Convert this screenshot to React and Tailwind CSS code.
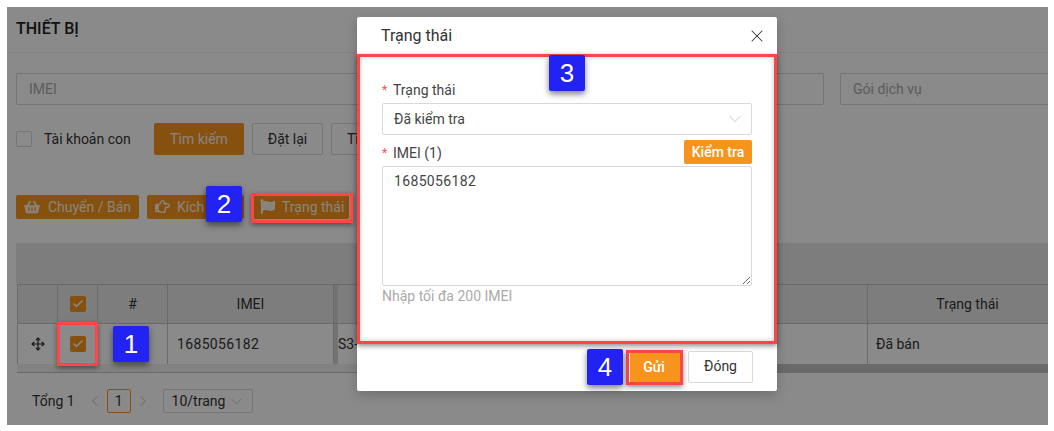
import React from 'react';
import { ChevronDown, ChevronLeft, ChevronRight, Move, X, Check } from 'lucide-react';
import { FaShoppingBasket, FaRegHandPointRight, FaFlag } from 'react-icons/fa';

const ActionButton = ({ icon: Icon, iconSize = 15, children, className = '' }) => (
  <button className={`h-6 flex items-center px-2 pb-[1px] bg-[#f7941d] text-white/90 rounded-[2px] text-sm whitespace-nowrap ${className}`}>
    <Icon size={iconSize} className="shrink-0" />
    {children}
  </button>
);

const CheckBox = () => (
  <span className="w-4 h-4 bg-[#f7941d] rounded-[2px] flex items-center justify-center text-white">
    <Check size={12} strokeWidth={3} />
  </span>
);

const Callout = ({ n, className }) => (
  <div className={`absolute w-9 h-9 bg-[#2222f2] text-white text-[26px] rounded-[2px] flex items-center justify-center shadow-[0_3px_6px_rgba(0,0,0,0.5)] font-['Liberation_Sans',sans-serif] ${className}`}>
    {n}
  </div>
);

const Highlight = ({ className }) => (
  <div className={`absolute border-[3px] border-[#ff4545] shadow-[0_2px_5px_rgba(0,0,0,0.45)] ${className}`} />
);

const Th = ({ className = '', children }) => (
  <div className={`shrink-0 border-r border-[#c4c4c4] flex items-center justify-center pb-[1px] ${className}`}>{children}</div>
);

const Page = () => (
  <div className="w-[1041px] h-[418px] bg-white text-[#333] overflow-hidden">
    <div className="h-[46px] pl-[9px] pb-[2px] flex items-center border-b border-[#f0f0f0] text-base font-medium text-[#222]">THIẾT BỊ</div>

    <div className="mt-5 ml-[9px] flex gap-4 w-[1100px]">
      <div className="w-[400px] h-8 border border-[#d9d9d9] rounded-[2px] px-3 flex items-center text-sm text-[#aaa]">IMEI</div>
      <div className="w-[392px] h-8 border border-[#d9d9d9] rounded-[2px]" />
      <div className="w-[260px] h-8 border border-[#d9d9d9] rounded-[2px] px-3 flex items-center text-sm text-[#aaa]">Gói dịch vụ</div>
    </div>

    <div className="mt-[18px] ml-[9px] flex items-center h-8">
      <span className="w-4 h-4 border border-[#d9d9d9] rounded-[2px]" />
      <span className="ml-3 w-[86px] text-sm whitespace-nowrap">Tài khoản con</span>
      <button className="ml-6 w-[90px] h-8 bg-[#f7941d] rounded-[2px] text-white/90 text-sm">Tìm kiếm</button>
      <button className="ml-2 w-[71px] h-8 border border-[#d9d9d9] rounded-[2px] text-sm">Đặt lại</button>
      <button className="ml-2 w-[71px] h-8 border border-[#d9d9d9] rounded-[2px] text-sm text-left pl-[15px]">Tìm</button>
    </div>

    <div className="mt-10 ml-[9px] flex gap-2 items-center">
      <ActionButton icon={FaShoppingBasket} iconSize={16} className="w-[123px] gap-2">Chuyển / Bán</ActionButton>
      <ActionButton icon={FaRegHandPointRight} className="w-[97px] gap-[7px]">Kích hoạt</ActionButton>
      <ActionButton icon={FaFlag} className="w-[97px] gap-[7px]">Trạng thái</ActionButton>
    </div>

    <div className="mt-6 ml-[9px] h-[41px] bg-[#e8e8e8]" />
    <div className="ml-[10px] text-sm">
      <div className="h-10 flex bg-[#e8e8e8] border-y border-[#c4c4c4] border-l">
        <Th className="w-10" />
        <Th className="w-10"><CheckBox /></Th>
        <Th className="w-[70px]">#</Th>
        <Th className="w-[166px]">IMEI</Th>
        <Th className="w-[534px] border-l-4 border-l-[#d4d4d4]" />
        <Th className="w-[200px]">Trạng thái</Th>
      </div>
      <div className="h-10 flex border-l border-[#c4c4c4]">
        <Th className="w-10"><Move size={14} className="text-[#222]" /></Th>
        <Th className="w-10"><CheckBox /></Th>
        <Th className="w-[70px]" />
        <Th className="w-[166px] !justify-start pl-[9px] tracking-[0.35px]">1685056182</Th>
        <Th className="w-[534px] !justify-start border-l-4 border-l-[#d4d4d4]">S3-</Th>
        <Th className="w-[200px] !justify-start pl-[8px]">Đã bán</Th>
      </div>
      <div className="h-[9px] flex border-b border-[#c4c4c4]">
        <div className="w-[400px] bg-[#f1f1f1]" />
        <div className="flex-1 bg-[#c4c4c4]" />
      </div>
    </div>

    <div className="mt-4 ml-[25px] flex items-center h-6 text-sm">
      <span>Tổng 1</span>
      <ChevronLeft size={18} strokeWidth={1.25} className="ml-[11px] text-[#bbb]" />
      <span className="ml-[3px] w-6 h-6 border border-[#f7941d] rounded-[2px] flex items-center justify-center">1</span>
      <ChevronRight size={18} strokeWidth={1.25} className="ml-[3px] text-[#bbb]" />
      <span className="ml-[11px] w-[90px] h-6 border border-[#d9d9d9] rounded-[2px] flex items-center pl-2 gap-[2px]">
        10/trang <ChevronDown size={19} strokeWidth={1.1} className="text-[#bbb]" />
      </span>
    </div>
  </div>
);

const Modal = () => (
  <div className="absolute left-[357px] top-[17px] w-[420px] h-[374px] bg-white rounded-[2px] shadow-[0_4px_12px_rgba(0,0,0,0.2)]">
    <div className="h-[37px] pl-6 pr-[10px] flex items-center justify-between text-base text-[#333]">
      Trạng thái
      <X size={20} strokeWidth={1.25} />
    </div>
    <div className="h-[290px] border-[3px] border-[#ff4545] shadow-[0_2px_5px_rgba(0,0,0,0.45),inset_0_0_4px_rgba(0,0,0,0.25)] px-[22px] text-sm text-[#444]">
      <div className="mt-[23px] h-5 flex items-center">
        <span className="text-[#ff4d4f] w-[11px] text-xs">*</span>Trạng thái
      </div>
      <div className="mt-[3px] h-8 border border-[#d9d9d9] rounded-[2px] pl-[11px] pr-[6px] flex items-center justify-between">
        Đã kiểm tra
        <ChevronDown size={20} strokeWidth={1} className="text-[#bbb]" />
      </div>
      <div className="mt-[5px] h-6 flex items-center justify-between">
        <span className="flex items-center pt-[2px]"><span className="text-[#ff4d4f] w-[11px] text-xs">*</span>IMEI (1)</span>
        <span className="w-[68px] h-6 bg-[#f7941d] text-white font-medium rounded-[2px] flex items-center justify-center">Kiểm tra</span>
      </div>
      <textarea
        readOnly
        defaultValue="1685056182"
        className="mt-[2px] block w-[370px] h-[120px] border border-[#d9d9d9] rounded-[2px] px-[11px] py-1 outline-none tracking-[0.35px] resize-y"
      />
      <div className="text-[#aaa]">Nhập tối đa 200 IMEI</div>
    </div>
    <div className="flex justify-end items-start pr-6 pt-[7px] text-sm">
      <button className="mr-[6px] mt-[2px] w-[52px] h-[29px] pb-[2px] pr-1 bg-[#f7941d] text-white font-medium">Gửi</button>
      <button className="w-[65px] h-8 pb-[2px] border border-[#d9d9d9] rounded-[2px] text-[#333]">Đóng</button>
    </div>
  </div>
);

const App = () => (
  <div className="relative w-[1054px] h-[431px] bg-white font-['Roboto',sans-serif] overflow-hidden">
    <div className="absolute left-[7px] top-[7px] w-[1041px] h-[418px] overflow-hidden">
      <Page />
      <div className="absolute inset-0 bg-black/[.46]" />
    </div>
    <Modal />
    <Highlight className="left-[57px] top-[322px] w-[41px] h-[44px]" />
    <Highlight className="left-[251px] top-[193px] w-[102px] h-[30px]" />
    <Highlight className="left-[626px] top-[350px] w-[57px] h-[35px]" />
    <Callout n="1" className="left-[113px] top-[326px]" />
    <Callout n="2" className="left-[206px] top-[186px]" />
    <Callout n="3" className="left-[549px] top-[55px]" />
    <Callout n="4" className="left-[587px] top-[349px]" />
  </div>
);

export default App;
